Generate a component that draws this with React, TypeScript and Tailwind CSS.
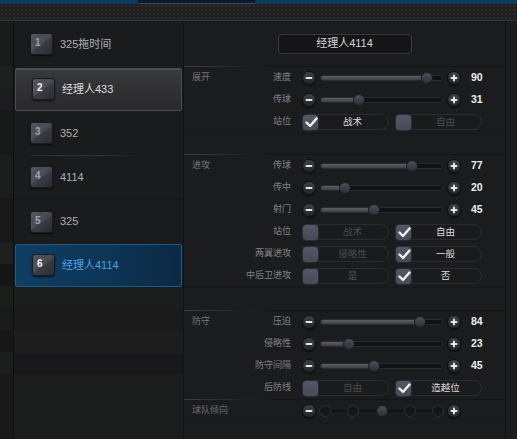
import React from "react";

const FONT = "font-['Liberation_Sans','Noto_Sans_CJK_SC',sans-serif]";

function RoundBtn({ plus }: { plus?: boolean }) {
  return (
    <div className="relative h-[14px] w-[14px] shrink-0 rounded-full border border-[#111214] bg-gradient-to-b from-[#3c4048] to-[#23262b] shadow-[0_1px_1px_rgba(0,0,0,0.6)]">
      <div className="absolute left-1/2 top-1/2 h-[2px] w-[7px] -translate-x-1/2 -translate-y-1/2 rounded-[1px] bg-[#e8e8e8]" />
      {plus && (
        <div className="absolute left-1/2 top-1/2 h-[7px] w-[2px] -translate-x-1/2 -translate-y-1/2 rounded-[1px] bg-[#e8e8e8]" />
      )}
    </div>
  );
}

function Slider({ v, pos }: { v: number; pos: number }) {
  return (
    <div className="flex items-center">
      <RoundBtn />
      <div className="relative ml-[4px] h-[6px] w-[123px] rounded-full border border-[#2a2b2e] bg-[#101113]">
        <div
          className="absolute left-0 top-0 h-full rounded-full bg-gradient-to-b from-[#5c5f64] to-[#3c3e42]"
          style={{ width: `${pos}%` }}
        />
        <div
          className="absolute top-1/2 h-[12px] w-[12px] -translate-x-1/2 -translate-y-1/2 rounded-full border border-[#1a1c20] bg-gradient-to-b from-[#4a5058] to-[#2c3138]"
          style={{ left: `${pos}%` }}
        />
      </div>
      <div className="ml-[4px]">
        <RoundBtn plus />
      </div>
      <span className="ml-[10px] text-[10.5px] font-bold text-[#eeeeee]">{v}</span>
    </div>
  );
}

function Check() {
  return (
    <svg width="13" height="11" viewBox="0 0 13 11" className="absolute left-[2px] top-[2px]">
      <path d="M1.5 5.5 L5 9 L11.5 1.5" stroke="#f2f2f2" strokeWidth="2.4" fill="none" strokeLinecap="round" strokeLinejoin="round" />
    </svg>
  );
}

function Toggle({ label, checked }: { label: string; checked?: boolean }) {
  return (
    <div className="relative flex h-[16px] w-[87px] items-center rounded-full border border-[#2b2c2f] bg-[#1a1b1d]">
      <div className="relative -ml-[1px] h-[17px] w-[17px] shrink-0 rounded-[4px] border border-[#2a2d34] bg-gradient-to-b from-[#545866] to-[#474b57]">
        {checked && <Check />}
      </div>
      <span className={`flex-1 pr-[2px] text-center text-[9.5px] ${checked ? "text-[#dedede]" : "text-[#4a4b4e]"}`}>
        {label}
      </span>
    </div>
  );
}

function Row({ section, label, children }: { section?: string; label?: string; children?: React.ReactNode }) {
  return (
    <div className="flex h-[22px] items-center">
      <div className="flex w-[107px] items-center justify-between pl-[8px]">
        <span className="text-[9px] text-[#74767a]">{section ?? ""}</span>
        <span className="text-[9px] text-[#808287]">{label ?? ""}</span>
      </div>
      <div className="ml-[11px] flex items-center gap-[6px]">{children}</div>
    </div>
  );
}

function SectionLine() {
  return (
    <div className="relative h-[1px] w-full bg-[#141416]">
      <div className="absolute left-0 top-0 h-[1px] w-[90px] bg-gradient-to-r from-[#3d3e41] to-transparent" />
    </div>
  );
}

function Badge({ n, active }: { n: number; active?: boolean }) {
  return (
    <div className="relative h-[22px] w-[23px] shrink-0 overflow-hidden rounded-[3px] border border-[#1b1c1f] bg-gradient-to-br from-[#595d66] via-[#3a3d44] to-[#2a2c31] shadow-[0_1px_2px_rgba(0,0,0,0.7)]">
      <div className="absolute -right-[4px] top-[4px] h-[6px] w-[30px] rotate-[-35deg] bg-[#ffffff10]" />
      <span className={`absolute left-[4px] top-[1px] text-[10px] font-bold ${active ? "text-[#f4f4f4]" : "text-[#a0a2a7]"}`}>{n}</span>
    </div>
  );
}

function ListItem({ n, text, mode, h = 44 }: { n: number; text: string; mode?: "gray" | "blue"; h?: number }) {
  let cls = "";
  let tcls = "text-[#aeb0b3]";
  if (mode === "gray") {
    cls = "mx-[1px] rounded-[2px] border border-[#4a4b4e] bg-gradient-to-b from-[#38393b] to-[#29292b] shadow-[inset_0_1px_0_#505154]";
    tcls = "text-[#dcdcdc]";
  } else if (mode === "blue") {
    cls = "mx-[1px] rounded-[2px] border border-[#1e5a86] bg-gradient-to-r from-[#0f3e63] via-[#0d3656] to-[#0b2a44]";
    tcls = "text-[#4da3e6]";
  }
  return (
    <div className="flex items-center" style={{ height: h }}>
      <div className={`flex h-[43px] w-full items-center pl-[16px] ${cls}`}>
        <Badge n={n} active={!!mode} />
        <span className={`ml-[7px] text-[11px] ${tcls}`}>{text}</span>
      </div>
    </div>
  );
}

export default function App() {
  return (
    <div className={`flex h-[439px] w-[517px] flex-col overflow-hidden bg-[#1b1c1e] ${FONT}`}>
      {/* header */}
      <div className="flex h-[4px] bg-[#0a3b5c]">
        <div className="ml-[138px] h-[4px] w-[118px] rounded-b-[3px] border-b border-[#3d4a66] bg-[#0f1827]" />
      </div>
      <div className="h-[16px] bg-[#1f1f20] bg-[radial-gradient(#2c2c2c_1px,transparent_1px)] bg-[length:4px_4px]" />
      <div className="h-[1px] bg-[#353638]" />
      <div className="flex flex-1">
        {/* left strip */}
        <div className="flex w-[14px] flex-col border-r border-[#0e0f0f] bg-[#171917]">
          <div className="h-[45px] bg-[#191b19]" />
          <div className="h-[22px] bg-[#1d211d]" />
          <div className="h-[22px] bg-[#1c1c1f]" />
          <div className="h-[44px] bg-[#181a18]" />
          <div className="h-[44px] bg-[#1b1d1b]" />
          <div className="h-[44px] bg-[#181818]" />
          <div className="h-[22px] bg-[#1d201d]" />
          <div className="h-[22px] bg-[#161616]" />
          <div className="h-[22px] bg-[#1c1e1c]" />
          <div className="h-[22px] bg-[#191b19]" />
          <div className="h-[22px] bg-[#171717]" />
          <div className="h-[22px] bg-[#1c1e1c]" />
          <div className="flex-1 bg-[#181918]" />
        </div>
        {/* list */}
        <div className="flex w-[170px] flex-col border-r border-[#111213] bg-[#1a1b1c]">
          <ListItem n={1} text="325拖时间" h={46} />
          <ListItem n={2} text="经理人433" mode="gray" />
          <ListItem n={3} text="352" />
          <div className="relative">
            <div className="absolute left-[16px] top-0 h-[1px] w-[115px] bg-gradient-to-r from-[#2a2b2d] via-[#353638] to-transparent" />
            <ListItem n={4} text="4114" />
          </div>
          <div className="border-t border-[#141515]">
            <ListItem n={5} text="325" h={43} />
          </div>
          <ListItem n={6} text="经理人4114" mode="blue" />
          <div className="flex-1 bg-[#1b1c1c]">
            <div className="mt-[22px] h-[22px] bg-[#1a1a1c]" />
            <div className="h-[22px] bg-[#1c1d1c]" />
            <div className="h-[22px] bg-[#19191b]" />
          </div>
        </div>
        {/* right panel */}
        <div className="flex w-[321px] flex-col bg-[#1b1c1e]">
          <div className="flex h-[45px] items-center justify-center">
            <div className="flex h-[20px] w-[134px] items-center justify-center rounded-[4px] border border-[#38393c] bg-[#151517] text-[11px] text-[#d4d4d4]">
              经理人4114
            </div>
          </div>
          <SectionLine />
          <Row section="展开" label="速度"><Slider v={90} pos={88} /></Row>
          <Row label="传球"><Slider v={31} pos={31} /></Row>
          <Row label="站位">
            <Toggle label="战术" checked />
            <Toggle label="自由" />
          </Row>
          <div className="h-[21px] border-t border-[#18191a]" />
          <SectionLine />
          <Row section="进攻" label="传球"><Slider v={77} pos={75} /></Row>
          <Row label="传中"><Slider v={20} pos={20} /></Row>
          <Row label="射门"><Slider v={45} pos={44} /></Row>
          <Row label="站位">
            <Toggle label="战术" />
            <Toggle label="自由" checked />
          </Row>
          <Row label="两翼进攻">
            <Toggle label="侵略性" />
            <Toggle label="一般" checked />
          </Row>
          <Row label="中后卫进攻">
            <Toggle label="是" />
            <Toggle label="否" checked />
          </Row>
          <div className="h-[23px] border-t border-[#18191a]" />
          <SectionLine />
          <Row section="防守" label="压迫"><Slider v={84} pos={82} /></Row>
          <Row label="侵略性"><Slider v={23} pos={23} /></Row>
          <Row label="防守间隔"><Slider v={45} pos={44} /></Row>
          <Row label="后防线">
            <Toggle label="自由" />
            <Toggle label="造越位" checked />
          </Row>
          <SectionLine />
          <div className="flex h-[22px] items-center">
            <div className="w-[107px] pl-[8px] text-[9px] text-[#6a6c70]">球队倾向</div>
            <div className="ml-[11px] flex items-center">
              <RoundBtn />
              <div className="relative ml-[4px] h-[12px] w-[123px]">
                <div className="absolute left-[5px] right-[5px] top-1/2 h-[2px] -translate-y-1/2 bg-[#111214]" />
                {[4, 27, 50, 73, 96].map((p, i) => (
                  <div
                    key={i}
                    className={`absolute top-1/2 -translate-x-1/2 -translate-y-1/2 rounded-full ${
                      i === 2
                        ? "h-[12px] w-[12px] border border-[#1a1c20] bg-gradient-to-b from-[#4a5058] to-[#2c3138]"
                        : "h-[12px] w-[12px] border border-[#2e2f32] bg-[#151618]"
                    }`}
                    style={{ left: `${p}%` }}
                  />
                ))}
              </div>
              <div className="ml-[4px]">
                <RoundBtn plus />
              </div>
            </div>
          </div>
          <div className="flex-1 border-t border-[#18191a]" />
        </div>
        {/* right strip */}
        <div className="flex-1 border-l border-[#101112] bg-[#1c1d1f]" />
      </div>
    </div>
  );
}
